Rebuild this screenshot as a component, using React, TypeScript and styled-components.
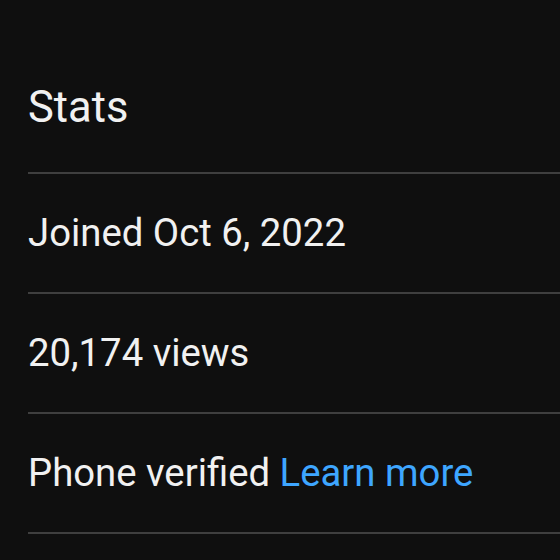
import React from 'react'
import styled, { createGlobalStyle } from 'styled-components'

const TEXT_COLOR = '#f1f1f1'
const LINK_COLOR = '#3ea6ff'
const DIVIDER_COLOR = '#3f3f3f'

const GlobalStyle = createGlobalStyle`
  html, body {
    margin: 0;
    padding: 0;
    background: #0f0f0f;
    overflow: hidden;
  }
  body {
    font-family: Roboto, "Noto Sans", Arial, sans-serif;
  }
`

const Page = styled.div`
  width: 560px;
  height: 560px;
  background: #0f0f0f;
  padding-left: 28px;
  box-sizing: border-box;
  overflow: hidden;
`

const Heading = styled.div`
  padding-top: 44px;
  line-height: 128px;
  font-size: 43.5px;
  font-weight: 400;
  color: ${TEXT_COLOR};
  border-bottom: 2px solid ${DIVIDER_COLOR};
  white-space: nowrap;
`

const Row = styled.div`
  height: 118px;
  line-height: 118px;
  font-size: 38.3px;
  font-weight: 400;
  color: ${TEXT_COLOR};
  border-bottom: 2px solid ${DIVIDER_COLOR};
  white-space: nowrap;
`

const Link = styled.a`
  color: ${LINK_COLOR};
  text-decoration: none;
`

const App = () => (
  <>
    <GlobalStyle />
    <Page>
      <Heading>Stats</Heading>
      <Row>Joined Oct 6, 2022</Row>
      <Row>20,174 views</Row>
      <Row>
        Phone verified <Link href="#">Learn more</Link>
      </Row>
    </Page>
  </>
)

export default App
